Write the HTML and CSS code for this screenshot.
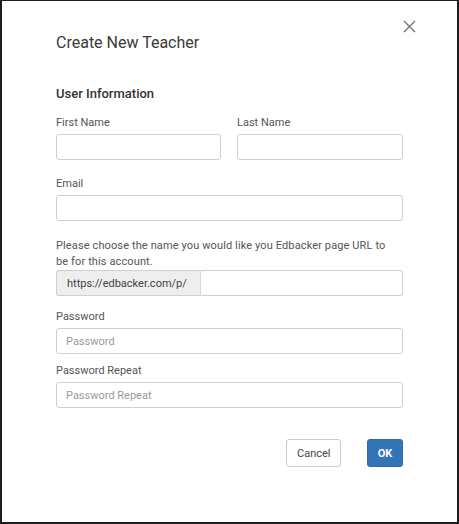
FILE: index.html
```html
<!DOCTYPE html>
<html>
<head>
<meta charset="utf-8">
<link rel="stylesheet" href="styles.css">
</head>
<body>
<div class="modal">
  <button class="close" aria-label="Close">
    <svg width="13" height="13" viewBox="0 0 13 13"><path d="M1 1L12 12M12 1L1 12" stroke="#6b6b6b" stroke-width="1.2" fill="none"/></svg>
  </button>
  <h1 class="title">Create New Teacher</h1>
  <h2 class="section">User Information</h2>
  <div class="row">
    <div class="field">
      <label class="label">First Name</label>
      <input class="input" type="text">
    </div>
    <div class="field">
      <label class="label">Last Name</label>
      <input class="input" type="text">
    </div>
  </div>
  <div class="field gap-20">
    <label class="label">Email</label>
    <input class="input" type="text">
  </div>
  <div class="field gap-20">
    <p class="help">Please choose the name you would like you Edbacker page URL to be for this account.</p>
    <div class="group">
      <span class="addon">https://edbacker.com/p/</span>
      <input class="input grow" type="text">
    </div>
  </div>
  <div class="field gap-16">
    <label class="label">Password</label>
    <input class="input" type="password" placeholder="Password">
  </div>
  <div class="field gap-13">
    <label class="label">Password Repeat</label>
    <input class="input" type="password" placeholder="Password Repeat">
  </div>
  <div class="actions">
    <button class="btn">Cancel</button>
    <button class="btn primary">OK</button>
  </div>
</div>
</body>
</html>
```
FILE: styles.css
```css
* { box-sizing: border-box; }
html, body { margin: 0; padding: 0; background: #fff; }
body { font-family: Roboto, "Liberation Sans", sans-serif; color: #333; }

.modal {
  position: relative;
  width: 459px;
  height: 524px;
  border: 2px solid #1e1e1e;
  border-top-width: 1px;
  padding: 32px 54px 0 54px;
  display: flex;
  flex-direction: column;
}

.close {
  position: absolute;
  top: 18px;
  right: 40px;
  width: 15px;
  height: 15px;
  padding: 1px;
  border: 0;
  background: transparent;
  display: flex;
  align-items: center;
  justify-content: center;
}

.title {
  margin: 0;
  font-size: 16px;
  line-height: 20px;
  font-weight: 400;
  color: #3a3a3a;
}

.section {
  margin: 32px 0 0 0;
  font-size: 13px;
  line-height: 18px;
  font-weight: 500;
  color: #333;
}

.row {
  margin-top: 13px;
  display: grid;
  grid-template-columns: 165px 166px;
  column-gap: 16px;
}

.field { display: flex; flex-direction: column; }
.gap-20 { margin-top: 17px; }
.gap-16 { margin-top: 14px; }
.gap-13 { margin-top: 10px; }

.label {
  font-size: 11px;
  line-height: 14px;
  color: #555;
  margin-bottom: 4px;
}

.help {
  margin: 0;
  max-width: 336px;
  font-size: 11px;
  line-height: 16px;
  letter-spacing: 0.12px;
  color: #555;
}

.input {
  height: 26px;
  width: 100%;
  border: 1px solid #cfcfcf;
  border-radius: 3px;
  padding: 0 9px;
  font-family: Roboto, "Liberation Sans", sans-serif;
  font-size: 11px;
  color: #333;
  background: #fff;
  outline: none;
}
.input::placeholder { color: #9a9a9a; }

.group { display: flex; height: 26px; }
.addon {
  width: 145px;
  flex: none;
  background: #eeeeee;
  border: 1px solid #cfcfcf;
  border-right: 1px solid #d8d8d8;
  border-radius: 3px 0 0 3px;
  font-size: 11px;
  color: #444;
  display: flex;
  align-items: center;
  padding-left: 10px;
}
.grow { flex: 1; border-left: 0; border-radius: 0 3px 3px 0; }

.actions {
  margin-top: 31px;
  display: flex;
  justify-content: flex-end;
  gap: 26px;
}

.btn {
  height: 28px;
  padding: 0 10px;
  border: 1px solid #cccccc;
  border-radius: 3px;
  background: #fff;
  font-family: Roboto, "Liberation Sans", sans-serif;
  font-size: 11px;
  color: #444;
}
.btn:first-child { width: 55px; }
.primary {
  width: 36px;
  padding: 0;
  background: #3374b6;
  border-color: #2e6aa7;
  color: #fff;
  font-weight: 700;
}
```
